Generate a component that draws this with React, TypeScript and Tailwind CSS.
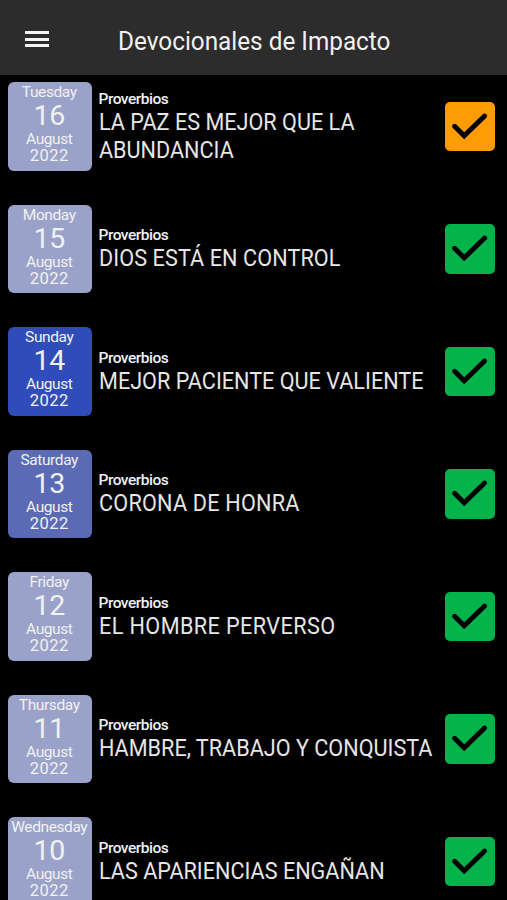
import clsx from 'clsx'

type Devotional = {
  weekday: string
  day: number
  title: string
  tile: string
  badge: string
  tracking?: string
}

const devotionals: Devotional[] = [
  { weekday: 'Tuesday', day: 16, title: 'LA PAZ ES MEJOR QUE LA ABUNDANCIA', tile: 'bg-[#9aa2c9]', badge: 'bg-[#ff9b05]' },
  { weekday: 'Monday', day: 15, title: 'DIOS ESTÁ EN CONTROL', tile: 'bg-[#9aa2c9]', badge: 'bg-[#04b34a]', tracking: 'tracking-[0.1px]' },
  { weekday: 'Sunday', day: 14, title: 'MEJOR PACIENTE QUE VALIENTE', tile: 'bg-[#304cb8]', badge: 'bg-[#04b34a]' },
  { weekday: 'Saturday', day: 13, title: 'CORONA DE HONRA', tile: 'bg-[#5a6ab4]', badge: 'bg-[#04b34a]', tracking: 'tracking-[0.25px]' },
  { weekday: 'Friday', day: 12, title: 'EL HOMBRE PERVERSO', tile: 'bg-[#9aa2c9]', badge: 'bg-[#04b34a]', tracking: 'tracking-[0.45px]' },
  { weekday: 'Thursday', day: 11, title: 'HAMBRE, TRABAJO Y CONQUISTA', tile: 'bg-[#9aa2c9]', badge: 'bg-[#04b34a]' },
  { weekday: 'Wednesday', day: 10, title: 'LAS APARIENCIAS ENGAÑAN', tile: 'bg-[#9aa2c9]', badge: 'bg-[#04b34a]' },
]

function Header() {
  return (
    <header className="flex h-[75px] shrink-0 items-center bg-[#2c2c2c] pt-[3px] pl-[25px]">
      <button aria-label="Menu" className="flex w-6 flex-col gap-[3.5px]">
        <span className="h-[3px] bg-[#f4f4f4]" />
        <span className="h-[3px] bg-[#f4f4f4]" />
        <span className="h-[3px] bg-[#f4f4f4]" />
      </button>
      <h1 className="ml-[69px] origin-left scale-x-[0.935] pt-[3px] text-[26px] leading-8 whitespace-nowrap">Devocionales de Impacto</h1>
    </header>
  )
}

function DateTile({ item }: { item: Devotional }) {
  return (
    <div className={clsx('flex h-[88.5px] w-[84.5px] shrink-0 flex-col items-center rounded-md pt-px pr-px', item.tile)}>
      <span className="text-[15.5px] leading-[19px] tracking-[-0.4px]">{item.weekday}</span>
      <span className="text-[28.5px] leading-[28px] tracking-[-0.3px]">{item.day}</span>
      <span className="text-[15.5px] leading-[18px] tracking-[-0.4px]">August</span>
      <span className="text-[16.5px] leading-[16px] tracking-[0.5px]">2022</span>
    </div>
  )
}

function CheckBadge({ color }: { color: string }) {
  return (
    <div className={clsx('size-[49.5px] shrink-0 rounded-[5px]', color)}>
      <svg viewBox="0 0 50 50" className="size-full" fill="none" stroke="#000" strokeWidth="5" strokeLinecap="round">
        <path d="M9.7 24.6 L19.4 34.2 L40 14.2" />
      </svg>
    </div>
  )
}

export default function App() {
  return (
    <div className="flex h-[900px] w-[507px] flex-col overflow-hidden bg-black font-[Roboto,sans-serif] text-[#f1f1f1]">
      <Header />
      <main className="flex flex-col gap-[34px] pt-[7px] pr-[12.5px] pl-[7.5px]">
        {devotionals.map(item => (
          <article key={item.day} className="flex h-[88.5px] shrink-0 items-center">
            <DateTile item={item} />
            <div className="ml-[6.5px] w-[346.5px] shrink-0">
              <div className="pt-px text-[15.5px] leading-5 font-medium tracking-[-0.5px]">Proverbios</div>
              <h2 className={clsx('-mt-px w-[372px] origin-left scale-x-[0.92] pb-px text-[23.5px] leading-[28px] text-[#e6e6e6]', item.tracking)}>
                {item.title}
              </h2>
            </div>
            <CheckBadge color={item.badge} />
          </article>
        ))}
      </main>
    </div>
  )
}
